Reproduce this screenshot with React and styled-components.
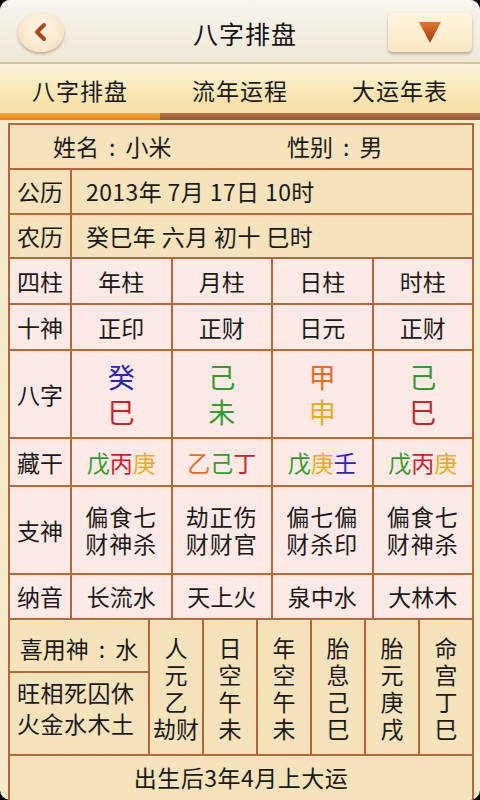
import React from 'react';
import styled, { createGlobalStyle } from 'styled-components';

const C = {
  line: '#b5683a',
  tan: '#f4e3bb',
  pink: '#fdeae7',
  paper: '#f5ebcd',
  ink: '#1c1a17',
  wood: '#2f9e2c',
  fire: '#c8242a',
  earth: '#e9ac1c',
  water: '#2626b8',
  orange: '#ee6a1e',
};

const GlobalStyle = createGlobalStyle`
  html, body {
    margin: 0;
    padding: 0;
    background: #000;
  }
  body {
    font-family: "Noto Sans CJK SC", "Noto Sans", sans-serif;
    color: ${C.ink};
  }
`;

const pillars = [
  { name: '年柱', god: '正印', gan: ['癸', C.water], zhi: ['巳', C.fire], hidden: [['戊', C.wood], ['丙', C.fire], ['庚', C.earth]], sub: ['偏食七', '财神杀'], sound: '长流水' },
  { name: '月柱', god: '正财', gan: ['己', C.wood], zhi: ['未', C.wood], hidden: [['乙', C.orange], ['己', C.wood], ['丁', C.fire]], sub: ['劫正伤', '财财官'], sound: '天上火' },
  { name: '日柱', god: '日元', gan: ['甲', C.orange], zhi: ['申', C.earth], hidden: [['戊', C.wood], ['庚', C.earth], ['壬', C.water]], sub: ['偏七偏', '财杀印'], sound: '泉中水' },
  { name: '时柱', god: '正财', gan: ['己', C.wood], zhi: ['巳', C.fire], hidden: [['戊', C.wood], ['丙', C.fire], ['庚', C.earth]], sub: ['偏食七', '财神杀'], sound: '大林木' },
];

const extras = [
  ['人', '元', '乙', '劫财'],
  ['日', '空', '午', '未'],
  ['年', '空', '午', '未'],
  ['胎', '息', '己', '巳'],
  ['胎', '元', '庚', '戌'],
  ['命', '宫', '丁', '巳'],
];

export default function App() {
  return (
    <>
      <GlobalStyle />
      <Screen>
        <Header>
          <BackButton aria-label="返回">
            <svg width="18" height="20" viewBox="0 0 18 20">
              <path d="M12 3 L5 10 L12 17" fill="none" stroke="#b0461a" strokeWidth="4" strokeLinecap="round" strokeLinejoin="round" />
            </svg>
          </BackButton>
          <Title>八字排盘</Title>
          <MenuButton aria-label="菜单">
            <svg width="22" height="21" viewBox="0 0 22 21">
              <defs>
                <linearGradient id="tri" x1="0" y1="0" x2="0" y2="1">
                  <stop offset="0" stopColor="#e2762c" />
                  <stop offset="1" stopColor="#a33b10" />
                </linearGradient>
              </defs>
              <path d="M0 0 H22 L11 21 Z" fill="url(#tri)" />
            </svg>
          </MenuButton>
        </Header>

        <Tabs>
          <Tab>八字排盘</Tab>
          <Tab>流年运程</Tab>
          <Tab>大运年表</Tab>
        </Tabs>
        <Indicator>
          <IndicatorActive />
        </Indicator>

        <Content>
          <Table>
            <NameRow>
              <NameField>姓名<Colon>:</Colon>小米</NameField>
              <span>性别<Colon>:</Colon>男</span>
            </NameRow>

            <Cell $bg={C.tan}>公历</Cell>
            <ValueCell>2013年 7月 17日 10时</ValueCell>
            <Cell $bg={C.tan}>农历</Cell>
            <ValueCell>癸巳年 六月 初十 巳时</ValueCell>

            <Cell>四柱</Cell>
            {pillars.map((p, i) => <Cell key={'n' + i}>{p.name}</Cell>)}

            <Cell>十神</Cell>
            {pillars.map((p, i) => <Cell key={'g' + i}>{p.god}</Cell>)}

            <Cell>八字</Cell>
            {pillars.map((p, i) => (
              <Cell key={'b' + i}>
                <BigChars>
                  <Glyph $color={p.gan[1]}>{p.gan[0]}</Glyph>
                  <Glyph $color={p.zhi[1]}>{p.zhi[0]}</Glyph>
                </BigChars>
              </Cell>
            ))}

            <Cell>藏干</Cell>
            {pillars.map((p, i) => (
              <Cell key={'h' + i}>
                <span>
                  {p.hidden.map(([ch, col], j) => <Glyph key={j} $color={col}>{ch}</Glyph>)}
                </span>
              </Cell>
            ))}

            <Cell>支神</Cell>
            {pillars.map((p, i) => (
              <Cell key={'s' + i}>
                <Lines>
                  {p.sub.map((l, j) => <div key={j}>{l}</div>)}
                </Lines>
              </Cell>
            ))}

            <Cell>纳音</Cell>
            {pillars.map((p, i) => <Cell key={'y' + i}>{p.sound}</Cell>)}

            <Bottom>
              <Summary>
                <SummaryTop>喜用神<Colon>:</Colon>水</SummaryTop>
                <SummaryBody>
                  <div>旺相死囚休</div>
                  <div>火金水木土</div>
                </SummaryBody>
              </Summary>
              {extras.map((col, i) => (
                <ExtraCell key={i}>
                  <ExtraLines>
                    {col.map((l, j) => <div key={j}>{l}</div>)}
                  </ExtraLines>
                </ExtraCell>
              ))}
            </Bottom>

            <FootCell>出生后3年4月上大运</FootCell>
          </Table>
        </Content>
      </Screen>
    </>
  );
}

const Screen = styled.div`
  width: 480px;
  height: 800px;
  overflow: hidden;
  border-radius: 10px;
  background: ${C.paper};
  display: flex;
  flex-direction: column;
`;

const Header = styled.header`
  height: 62px;
  flex: none;
  display: grid;
  grid-template-columns: 1fr auto 1fr;
  align-items: center;
  padding: 0 8px 0 18px;
  background: linear-gradient(#f8f5ee, #efe8d8);
  border-bottom: 2px solid #d8c49e;
`;

const BackButton = styled.button`
  justify-self: start;
  width: 46px;
  height: 40px;
  margin-top: 2px;
  border: none;
  border-radius: 50%;
  padding: 0;
  display: flex;
  align-items: center;
  justify-content: center;
  background: radial-gradient(ellipse at 50% 40%, #fff7e6 0%, #fbead0 55%, #f0d6ab 100%);
  box-shadow: 0 2px 3px rgba(90, 60, 20, 0.35);
`;

const Title = styled.h1`
  margin: 4px 0 0;
  font-size: 25px;
  font-weight: 400;
  color: #141414;
  letter-spacing: 1px;
`;

const MenuButton = styled.button`
  justify-self: end;
  width: 84px;
  height: 39px;
  margin-top: 2px;
  border: none;
  border-radius: 5px;
  padding: 0;
  display: flex;
  align-items: center;
  justify-content: center;
  background: linear-gradient(#fff6df, #f9e7c3);
  box-shadow: 0 2px 3px rgba(90, 60, 20, 0.35);
`;

const Tabs = styled.nav`
  height: 49px;
  flex: none;
  display: grid;
  grid-template-columns: repeat(3, 1fr);
  background: linear-gradient(#fdf4dc, #f8e6b2 60%, #f6dfa4);
`;

const Tab = styled.div`
  display: flex;
  align-items: center;
  justify-content: center;
  padding-top: 2px;
  font-size: 23px;
  color: #1a1a1a;
  letter-spacing: 1px;
`;

const Indicator = styled.div`
  height: 7px;
  flex: none;
  background: linear-gradient(#b27250, #9a5636);
`;

const IndicatorActive = styled.div`
  width: 160px;
  height: 100%;
  background: linear-gradient(#fbab3c, #ee7e14);
`;

const Content = styled.main`
  flex: 1;
  padding: 3px 6px 0 8px;
`;

const Table = styled.div`
  display: grid;
  grid-template-columns: 60px repeat(4, 1fr);
  grid-template-rows: 43px 43px 42px 44px 44px 86px 46px 86px 43px 134px 44px;
  gap: 2px;
  border: 2px solid ${C.line};
  border-bottom: none;
  background: ${C.line};
`;

const Cell = styled.div`
  display: flex;
  align-items: center;
  justify-content: center;
  background: ${(p) => p.$bg || C.pink};
  font-size: 23px;
  line-height: 1;
`;

const ValueCell = styled(Cell).attrs({ $bg: C.tan })`
  grid-column: span 4;
  justify-content: flex-start;
  padding-left: 14px;
  letter-spacing: 0.4px;
`;

const NameRow = styled(Cell).attrs({ $bg: C.tan })`
  grid-column: 1 / -1;
  justify-content: flex-start;
  padding-left: 43px;
`;

const NameField = styled.span`
  width: 234px;
`;

const Colon = styled.span`
  display: inline-block;
  margin: 0 10px;
`;

const BigChars = styled.div`
  display: flex;
  flex-direction: column;
  align-items: center;
  font-size: 27px;
  line-height: 35px;
`;

const Glyph = styled.span`
  color: ${(p) => p.$color};
`;

const Lines = styled.div`
  text-align: center;
  line-height: 27px;
  letter-spacing: 1px;
`;

const Bottom = styled.div`
  grid-column: 1 / -1;
  display: grid;
  grid-template-columns: 138px repeat(6, 1fr);
  gap: 2px;
  background: ${C.line};
`;

const Summary = styled.div`
  display: grid;
  grid-template-rows: 51px 1fr;
  gap: 2px;
`;

const SummaryTop = styled(Cell).attrs({ $bg: C.tan })`
  padding-top: 6px;
`;

const SummaryBody = styled.div`
  background: ${C.tan};
  font-size: 23px;
  line-height: 31px;
  letter-spacing: 0.5px;
  padding: 4px 0 0 7px;
`;

const ExtraCell = styled(Cell).attrs({ $bg: C.tan })``;

const ExtraLines = styled.div`
  text-align: center;
  line-height: 27px;
  margin-top: 2px;
`;

const FootCell = styled(Cell).attrs({ $bg: C.tan })`
  grid-column: 1 / -1;
  align-items: flex-start;
  padding-top: 10px;
  letter-spacing: 0.5px;
`;
